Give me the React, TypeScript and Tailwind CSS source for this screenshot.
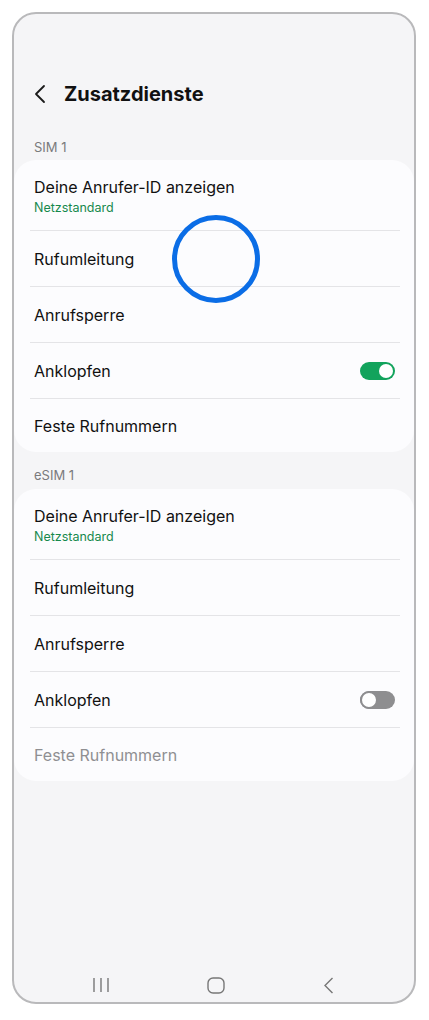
import React from 'react';

type Row = { title: string; sub?: string; toggle?: 'on' | 'off'; disabled?: boolean };

const rows = (): Row[] => [
  { title: 'Deine Anrufer-ID anzeigen', sub: 'Netzstandard' },
  { title: 'Rufumleitung' },
  { title: 'Anrufsperre' },
  { title: 'Anklopfen' },
  { title: 'Feste Rufnummern' },
];

function Toggle({ on }: { on: boolean }) {
  if (on) {
    return (
      <div className="flex h-[18px] w-[35px] items-center justify-end rounded-full bg-[#12a35c] p-[2px]">
        <div className="h-[14px] w-[14px] rounded-full bg-white" />
      </div>
    );
  }
  return (
    <div className="flex h-[18px] w-[35px] items-center rounded-full bg-[#8e8e90] p-0">
      <div className="h-[18px] w-[18px] rounded-full border-2 border-[#8e8e90] bg-white" />
    </div>
  );
}

function Card({ items }: { items: Row[] }) {
  return (
    <div className="rounded-[22px] bg-[#fcfcfe]">
      {items.map((r, i) => (
        <div key={i}>
          {i > 0 && <div className="ml-4 mr-[14px] h-px bg-[#e4e4e7]" />}
          {r.sub ? (
            <div className="h-[70px] pl-5 pt-4">
              <div className="text-[16px] leading-[22px] text-[#111]">{r.title}</div>
              <div className="mt-[2px] text-[12.5px] leading-[16px] text-[#17894d]">{r.sub}</div>
            </div>
          ) : (
            <div className={`flex items-center justify-between pl-5 pr-[19px] ${i === items.length - 1 ? 'h-[53px]' : 'h-[55px]'}`}>
              <span className={`text-[16px] leading-[22px] ${r.disabled ? 'text-[#8f8f92]' : 'text-[#111]'}`}>{r.title}</span>
              {r.toggle && <Toggle on={r.toggle === 'on'} />}
            </div>
          )}
        </div>
      ))}
    </div>
  );
}

export default function App() {
  const sim1 = rows();
  sim1[3].toggle = 'on';
  const esim1 = rows();
  esim1[3].toggle = 'off';
  esim1[4].disabled = true;

  return (
    <div className="h-[1020px] w-[429px] bg-white pl-3 pt-3" style={{ fontFamily: 'Inter, Roboto, "Noto Sans", sans-serif' }}>
      <div className="relative flex h-[992px] w-[404px] flex-col overflow-hidden rounded-[24px] border-2 border-[#b9b9bb] bg-[#f5f5f7]">
        <div className="mt-[60px] flex h-10 items-center pl-[19px]">
          <svg width="14" height="20" viewBox="0 0 14 20" fill="none">
            <path d="M11 2 L3 10 L11 18" stroke="#1a1a1a" strokeWidth="1.8" strokeLinecap="round" strokeLinejoin="round" />
          </svg>
          <h1 className="ml-[17px] text-[20px] font-bold leading-none text-[#111]">Zusatzdienste</h1>
        </div>

        <div className="mt-[25px] pl-5 text-[13px] leading-[16px] text-[#7a7a7c]">SIM 1</div>
        <div className="mt-[5px]">
          <Card items={sim1} />
        </div>

        <div className="mt-[15px] pl-5 text-[13px] leading-[16px] text-[#7a7a7c]">eSIM 1</div>
        <div className="mt-[6px]">
          <Card items={esim1} />
        </div>

        <div className="mt-auto mb-[2px] flex h-[30px] items-center">
          <div className="flex w-full items-center justify-between pl-[79px] pr-[80px]">
            <svg width="16" height="16" viewBox="0 0 16 16" fill="none">
              <path d="M1 1 V15 M8 1 V15 M15 1 V15" stroke="#777" strokeWidth="1.4" />
            </svg>
            <svg width="18" height="17" viewBox="0 0 18 17" fill="none">
              <rect x="1" y="1" width="16" height="15" rx="5" stroke="#777" strokeWidth="1.4" />
            </svg>
            <svg width="11" height="17" viewBox="0 0 11 17" fill="none">
              <path d="M9.5 1 L2 8.5 L9.5 16" stroke="#777" strokeWidth="1.4" />
            </svg>
          </div>
        </div>

        <div className="absolute left-[158px] top-[201px] h-[88px] w-[88px] rounded-full border-[5px] border-[#0b6de6]" />
      </div>
    </div>
  );
}
